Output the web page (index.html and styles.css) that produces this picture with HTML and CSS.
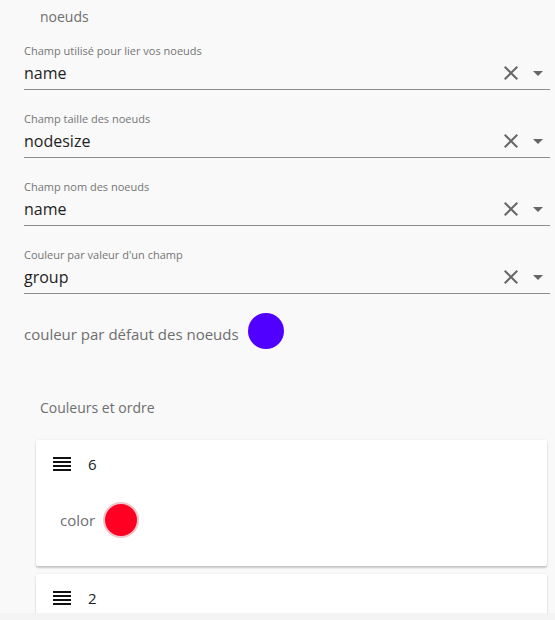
FILE: index.html
```html
<!DOCTYPE html>
<html lang="fr">
<head>
    <meta charset="UTF-8">
    <meta name="viewport" content="width=device-width, initial-scale=1.0">
    <title>Noeuds</title>
    <link rel="stylesheet" href="styles.css">
</head>
<body>
    <div class="panel">
        <div class="section-title">noeuds</div>

        <div class="field">
            <label class="field-label">Champ utilisé pour lier vos noeuds</label>
            <div class="select">
                <span class="select-value">name</span>
                <svg class="icon clear" viewBox="0 0 24 24"><path d="M19 6.41L17.59 5 12 10.59 6.41 5 5 6.41 10.59 12 5 17.59 6.41 19 12 13.41 17.59 19 19 17.59 13.41 12z"/></svg>
                <svg class="icon arrow" viewBox="0 0 24 24"><path d="M7 10l5 5 5-5z"/></svg>
            </div>
        </div>

        <div class="field">
            <label class="field-label">Champ taille des noeuds</label>
            <div class="select">
                <span class="select-value">nodesize</span>
                <svg class="icon clear" viewBox="0 0 24 24"><path d="M19 6.41L17.59 5 12 10.59 6.41 5 5 6.41 10.59 12 5 17.59 6.41 19 12 13.41 17.59 19 19 17.59 13.41 12z"/></svg>
                <svg class="icon arrow" viewBox="0 0 24 24"><path d="M7 10l5 5 5-5z"/></svg>
            </div>
        </div>

        <div class="field">
            <label class="field-label">Champ nom des noeuds</label>
            <div class="select">
                <span class="select-value">name</span>
                <svg class="icon clear" viewBox="0 0 24 24"><path d="M19 6.41L17.59 5 12 10.59 6.41 5 5 6.41 10.59 12 5 17.59 6.41 19 12 13.41 17.59 19 19 17.59 13.41 12z"/></svg>
                <svg class="icon arrow" viewBox="0 0 24 24"><path d="M7 10l5 5 5-5z"/></svg>
            </div>
        </div>

        <div class="field">
            <label class="field-label">Couleur par valeur d'un champ</label>
            <div class="select">
                <span class="select-value">group</span>
                <svg class="icon clear" viewBox="0 0 24 24"><path d="M19 6.41L17.59 5 12 10.59 6.41 5 5 6.41 10.59 12 5 17.59 6.41 19 12 13.41 17.59 19 19 17.59 13.41 12z"/></svg>
                <svg class="icon arrow" viewBox="0 0 24 24"><path d="M7 10l5 5 5-5z"/></svg>
            </div>
        </div>

        <div class="default-color">
            <span>couleur par défaut des noeuds</span>
            <div class="swatch purple"></div>
        </div>

        <div class="section-title order-title">Couleurs et ordre</div>

        <div class="card">
            <div class="card-header">
                <svg class="icon handle" viewBox="0 0 24 24"><path d="M3 15h18v-2H3v2zm0 4h18v-2H3v2zm0-8h18V9H3v2zm0-6v2h18V5H3z"/></svg>
                <span class="card-value">6</span>
            </div>
            <div class="color-row">
                <span>color</span>
                <div class="swatch red"></div>
            </div>
        </div>

        <div class="card">
            <div class="card-header">
                <svg class="icon handle" viewBox="0 0 24 24"><path d="M3 15h18v-2H3v2zm0 4h18v-2H3v2zm0-8h18V9H3v2zm0-6v2h18V5H3z"/></svg>
                <span class="card-value">2</span>
            </div>
        </div>
    </div>
</body>
</html>
```

FILE: styles.css
```css
body {
    font-family: "Open Sans", sans-serif;
    margin: 0;
    padding: 0;
    background-color: #f4f4f4;
}
.panel {
    height: 613px;
    overflow: hidden;
    padding: 7px 5px 0 24px;
    background-color: #f9f9f9;
    box-sizing: border-box;
}
.section-title {
    padding-left: 16px;
    font-size: 14px;
    line-height: 20px;
    color: #6e6e6e;
}
.field {
    margin-top: 17px;
}
.field + .field {
    margin-top: 22px;
}
.field-label {
    display: block;
    font-size: 11px;
    line-height: 14px;
    color: #757575;
    margin-bottom: 3px;
}
.select {
    display: flex;
    align-items: center;
    padding-bottom: 4px;
    border-bottom: 1px solid #8c8c8c;
}
.select-value {
    flex: 1;
    font-size: 16px;
    line-height: 24px;
    color: #1e1e1e;
}
.icon {
    width: 24px;
    height: 24px;
    fill: #666;
}
.arrow {
    margin-left: 3px;
}
.default-color {
    display: flex;
    align-items: center;
    margin-top: 19px;
    font-size: 15px;
    color: #6e6e6e;
}
.default-color span {
    padding-top: 5px;
    margin-right: 9px;
}
.swatch {
    width: 36px;
    height: 36px;
    border-radius: 50%;
    box-sizing: border-box;
}
.purple {
    background-color: #5000ff;
}
.red {
    background-color: #ff0022;
    border: 2px solid #f2c4ca;
}
.order-title {
    margin-top: 49px;
}
.card {
    margin: 22px 3px 8px 12px;
    background-color: #fff;
    border-radius: 2px;
    box-shadow: 0 2px 2px rgba(0, 0, 0, 0.2), 0 0 2px rgba(0, 0, 0, 0.08);
    padding: 12px 14px 28px;
}
.card + .card {
    margin-top: 8px;
}
.card-header {
    display: flex;
    align-items: center;
}
.handle {
    fill: #111;
}
.card-value {
    margin-left: 14px;
    padding-bottom: 1px;
    font-size: 15px;
    color: #222;
}
.color-row {
    display: flex;
    align-items: center;
    margin-top: 26px;
    padding-left: 10px;
    font-size: 15px;
    color: #6e6e6e;
}
.color-row span {
    margin-right: 8px;
}
```
